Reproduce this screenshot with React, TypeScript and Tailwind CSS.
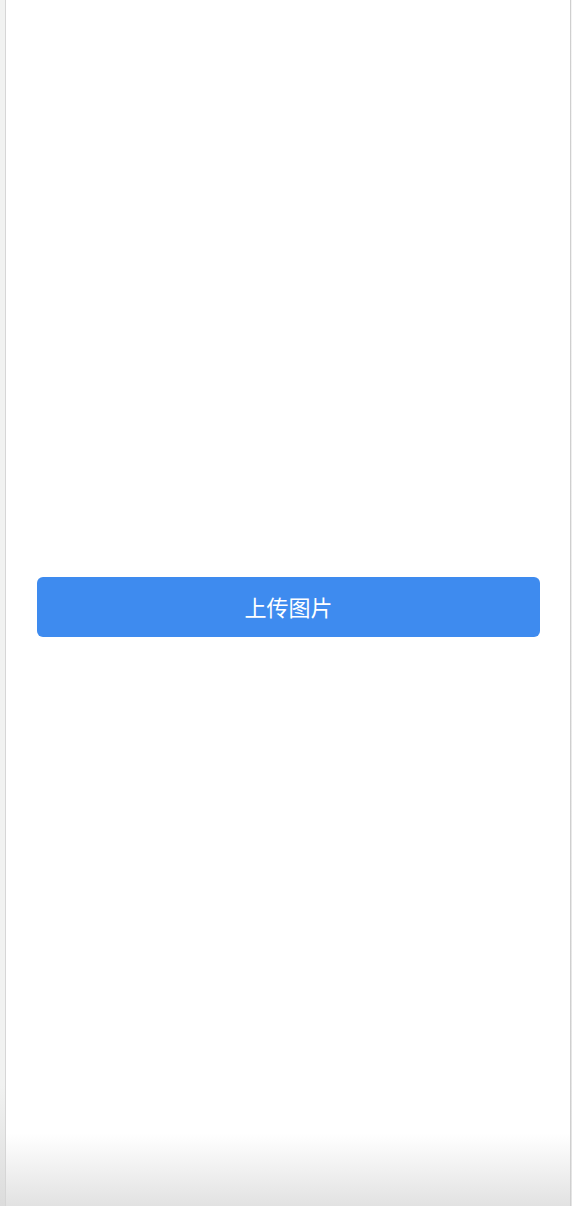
import React from 'react';

const App = () => {
  return (
    <div className="flex h-[1206px] w-full bg-white" style={{ fontFamily: '"Noto Sans CJK SC", "Noto Sans", sans-serif' }}>
      <div className="w-[6px] shrink-0 bg-gradient-to-b from-[#f1f2f1] from-90% to-[#dcdcdc] border-r border-[#d6d6d6]" />
      <div className="flex flex-1 flex-col bg-gradient-to-b from-white from-[94%] to-[#e2e2e2]">
        <div className="flex flex-1 items-center pl-[31px] pr-[30px] pt-[7px]">
          <button className="flex h-[60px] w-full items-center justify-center rounded-[6px] bg-[#3e8bef] text-[22px] text-white">
            上传图片
          </button>
        </div>
      </div>
      <div className="w-[2px] shrink-0 border-l border-[#cfcfcf] bg-gradient-to-b from-[#f4f4f4] to-[#e4e4e4]" />
    </div>
  );
};

export default App;
